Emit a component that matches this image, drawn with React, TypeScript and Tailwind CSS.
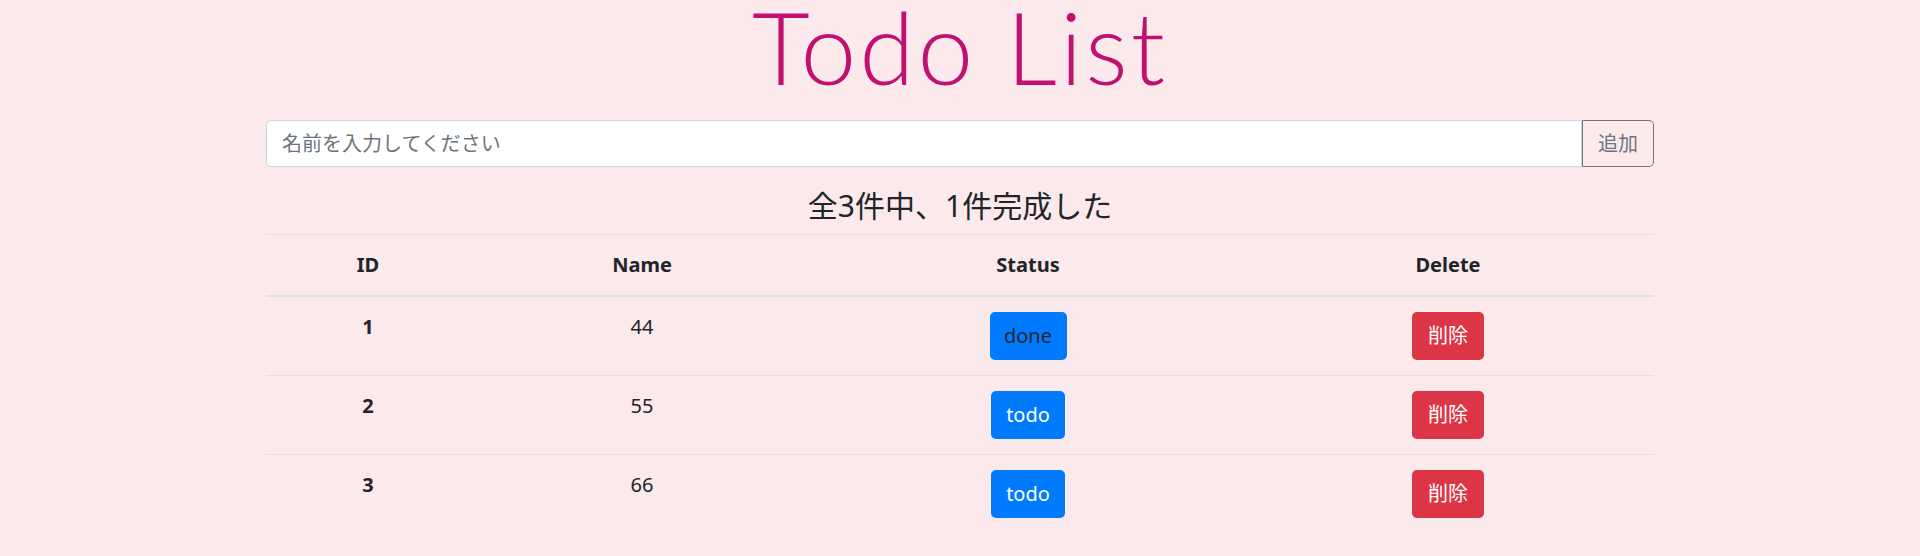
import React from "react";

type Todo = { id: number; name: string; done: boolean };

const todos: Todo[] = [
  { id: 1, name: "44", done: true },
  { id: 2, name: "55", done: false },
  { id: 3, name: "66", done: false },
];

const cols = "grid grid-cols-[204px_344px_428px_412px] text-center";

export default function App() {
  const doneCount = todos.filter((t) => t.done).length;

  return (
    <div
      className="flex min-h-[556px] w-full flex-col bg-[#fbe9eb] text-[#212529]"
      style={{ fontFamily: '"Noto Sans", "Noto Sans CJK JP", sans-serif' }}
    >
      <div className="mx-auto flex w-[1388px] flex-col">
        {/* Title */}
        <h1
          className="-mt-[14px] mb-[14px] text-center text-[100px] font-light leading-[120px] tracking-[3px] text-[#c1106f]"
          style={{ fontFamily: 'Lato, "Noto Sans", sans-serif' }}
        >
          Todo List
        </h1>

        {/* Add form */}
        <div className="flex h-[47px]">
          <input
            type="text"
            placeholder="名前を入力してください"
            className="h-full flex-1 rounded-l-[5px] border border-[#ced4da] bg-white px-[15px] text-[20px] text-[#495057] outline-none placeholder:text-[#6c757d]"
          />
          <button className="h-full w-[72px] rounded-r-[5px] border border-[#6c757d] text-[20px] text-[#6c757d]">
            追加
          </button>
        </div>

        {/* Summary */}
        <h4 className="mb-[10px] mt-[21px] text-center text-[30px] font-normal leading-[36px]">
          全{todos.length}件中、{doneCount}件完成した
        </h4>

        {/* Table */}
        <div className="text-[20px]">
          <div className={`${cols} border-t border-b-2 border-[#dee2e6] font-bold`}>
            <div className="py-[15px] leading-[30px]">ID</div>
            <div className="py-[15px] leading-[30px]">Name</div>
            <div className="py-[15px] leading-[30px]">Status</div>
            <div className="py-[15px] leading-[30px]">Delete</div>
          </div>
          {todos.map((todo, i) => (
            <div
              key={todo.id}
              className={`${cols} ${i > 0 ? "border-t border-[#dee2e6]" : ""}`}
            >
              <div className="py-[15px] font-bold leading-[30px]">{todo.id}</div>
              <div className="py-[15px] leading-[30px]">{todo.name}</div>
              <div className="flex justify-center py-[15px]">
                <button
                  className={`h-[48px] rounded-[5px] bg-[#007bff] text-[20px] ${
                    todo.done ? "w-[77px] text-[#212529]" : "w-[74px] text-white"
                  }`}
                >
                  {todo.done ? "done" : "todo"}
                </button>
              </div>
              <div className="flex justify-center py-[15px]">
                <button className="h-[48px] w-[72px] rounded-[5px] bg-[#dc3545] text-[20px] text-white">
                  削除
                </button>
              </div>
            </div>
          ))}
        </div>
      </div>
    </div>
  );
}
